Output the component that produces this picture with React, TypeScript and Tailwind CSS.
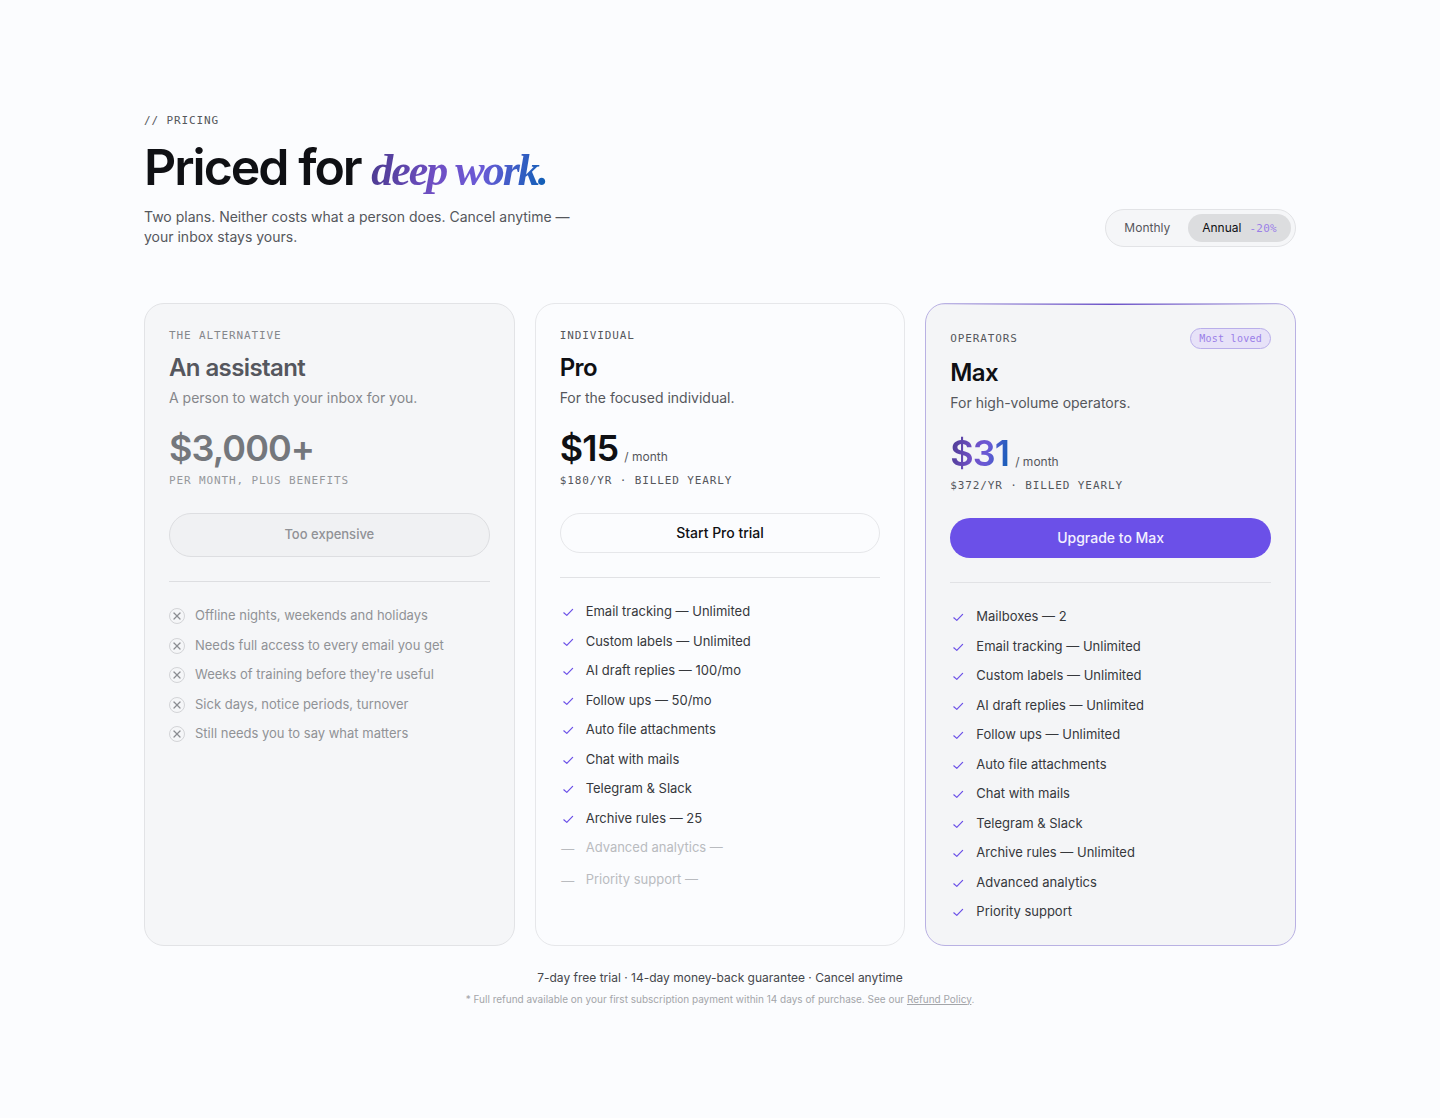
import { clsx } from "clsx"
import { Check, X } from "lucide-react"
import * as React from "react"

type Feature = {
    label: string
    included: boolean
}

type Plan = {
    id: string
    eyebrow: string
    name: string
    description: string
    price: string
    period?: string
    billing: string
    cta: string
    variant: "muted" | "plain" | "featured"
    badge?: string
    features: Feature[]
}

const on = (label: string): Feature => ({ label, included: true })
const off = (label: string): Feature => ({ label, included: false })

const plans: Plan[] = [
    {
        id: "assistant",
        eyebrow: "The alternative",
        name: "An assistant",
        description: "A person to watch your inbox for you.",
        price: "$3,000+",
        billing: "Per month, plus benefits",
        cta: "Too expensive",
        variant: "muted",
        features: [
            off("Offline nights, weekends and holidays"),
            off("Needs full access to every email you get"),
            off("Weeks of training before they're useful"),
            off("Sick days, notice periods, turnover"),
            off("Still needs you to say what matters"),
        ],
    },
    {
        id: "pro",
        eyebrow: "Individual",
        name: "Pro",
        description: "For the focused individual.",
        price: "$15",
        period: "/ month",
        billing: "$180/yr · billed yearly",
        cta: "Start Pro trial",
        variant: "plain",
        features: [
            on("Email tracking — Unlimited"),
            on("Custom labels — Unlimited"),
            on("AI draft replies — 100/mo"),
            on("Follow ups — 50/mo"),
            on("Auto file attachments"),
            on("Chat with mails"),
            on("Telegram & Slack"),
            on("Archive rules — 25"),
            off("Advanced analytics —"),
            off("Priority support —"),
        ],
    },
    {
        id: "max",
        eyebrow: "Operators",
        name: "Max",
        description: "For high-volume operators.",
        price: "$31",
        period: "/ month",
        billing: "$372/yr · billed yearly",
        cta: "Upgrade to Max",
        variant: "featured",
        badge: "Most loved",
        features: [
            on("Mailboxes — 2"),
            on("Email tracking — Unlimited"),
            on("Custom labels — Unlimited"),
            on("AI draft replies — Unlimited"),
            on("Follow ups — Unlimited"),
            on("Auto file attachments"),
            on("Chat with mails"),
            on("Telegram & Slack"),
            on("Archive rules — Unlimited"),
            on("Advanced analytics"),
            on("Priority support"),
        ],
    },
]

const monoLabel =
    "font-['DejaVu_Sans_Mono',monospace] text-[11px] leading-4 tracking-[0.08em] uppercase"

const brandText =
    "bg-linear-[100deg,#4b3a8f_0%,#6f4fc4_38%,#6a5ad6_62%,#0a5fb4_100%] bg-clip-text text-transparent"

function FeatureIcon({ plan, feature }: { plan: Plan; feature: Feature }) {
    if (plan.variant === "muted") {
        return (
            <span className="mt-[2px] flex size-4 shrink-0 items-center justify-center rounded-full border border-[#d3d4d7] text-[#8b8d92]">
                <X
                    className="size-3 shrink-0"
                    strokeWidth={2.5}
                />
            </span>
        )
    }

    if (!feature.included) {
        return (
            <span className="w-4 shrink-0 text-center leading-[22px] text-[#b9bbbf]">
                —
            </span>
        )
    }

    return (
        <span className="mt-[2px] flex size-4 shrink-0 items-center justify-center text-[#6b50e8]">
            <svg
                viewBox="0 0 16 16"
                fill="none"
                stroke="currentColor"
                strokeWidth={1.2}
                strokeLinecap="round"
                strokeLinejoin="round"
                className="size-4"
                aria-hidden="true">
                <path d="M3.8 8.8l3 2.6 5.8-6" />
            </svg>
        </span>
    )
}

function PlanCard({ plan }: { plan: Plan }) {
    const muted = plan.variant === "muted"
    const featured = plan.variant === "featured"

    return (
        <article
            className={clsx(
                "relative flex flex-col overflow-hidden rounded-[20px] border px-6 pt-6 pb-[23px]",
                muted && "border-[#e2e3e6] bg-[#f5f6f8]",
                featured && "border-[#b9b1e3] bg-[#f4f5f7]",
                plan.variant === "plain" && "border-[#e6e7ea] bg-[#fbfcfe]",
            )}>
            {featured && (
                <div className="absolute inset-x-0 top-0 h-px bg-linear-to-r from-transparent via-[#6b50c8] to-transparent" />
            )}

            <div className="flex items-center justify-between">
                <span
                    className={clsx(
                        monoLabel,
                        muted ? "text-[#85878b]" : "text-[#55575c]",
                    )}>
                    {plan.eyebrow}
                </span>
                {plan.badge && (
                    <span className="rounded-full border border-[#b9aeea] bg-[#e7e2f8] px-2 font-['DejaVu_Sans_Mono',monospace] text-[10px] leading-[19px] tracking-wide text-[#9b7fe8]">
                        {plan.badge}
                    </span>
                )}
            </div>

            <h2
                className={clsx(
                    "mt-2 text-[24px] leading-8 font-semibold tracking-tight",
                    muted ? "text-[#55575e]" : "text-[#0f1014]",
                )}>
                {plan.name}
            </h2>
            <p
                className={clsx(
                    "mt-1 text-sm",
                    muted ? "text-[#85878b]" : "text-[#55575c]",
                )}>
                {plan.description}
            </p>

            <div className="mt-5 flex items-baseline gap-1.5">
                <span
                    className={clsx(
                        "text-4xl leading-10 font-semibold tracking-tight",
                        muted && "text-[#74777c]",
                        plan.variant === "plain" && "text-[#0f1014]",
                        featured && brandText,
                    )}>
                    {plan.price}
                </span>
                {plan.period && (
                    <span className="text-xs text-[#55575c]">
                        {plan.period}
                    </span>
                )}
            </div>
            <p
                className={clsx(
                    monoLabel,
                    "mt-[5px]",
                    muted ? "text-[#96989c]" : "text-[#55575c]",
                )}>
                {plan.billing}
            </p>

            <button
                type="button"
                disabled={muted}
                className={clsx(
                    "mt-6 rounded-full font-medium",
                    muted &&
                        "h-11 border border-[#dddee1] bg-[#f0f1f3] text-[13px] text-[#909296]",
                    plan.variant === "plain" &&
                        "h-10 border border-[#e6e7ea] text-sm text-[#0f1014]",
                    featured && "h-10 bg-[#6b50e8] text-sm text-[#f4f1ff]",
                )}>
                {plan.cta}
            </button>

            <ul
                className={clsx(
                    "mt-6 flex flex-col gap-2.5 border-t pt-6 text-[13px] leading-normal",
                    muted ? "border-[#dddee1]" : "border-[#e1e2e5]",
                )}>
                {plan.features.map((feature) => (
                    <li
                        key={feature.label}
                        className={clsx(
                            "flex items-start gap-2.5",
                            muted && "text-[#909296]",
                            !muted && feature.included && "text-[#36383c]",
                            !muted && !feature.included && "text-[#b9bbbf]",
                        )}>
                        <FeatureIcon
                            plan={plan}
                            feature={feature}
                        />
                        <span>{feature.label}</span>
                    </li>
                ))}
            </ul>
        </article>
    )
}

export default function App() {
    const [annual, setAnnual] = React.useState(true)

    return (
        <main className="min-h-screen bg-[#fbfcfe] px-6 pt-[113px] pb-28 font-['Inter',sans-serif]">
            <div className="mx-auto max-w-6xl">
                <header className="flex items-end justify-between gap-6">
                    <div>
                        <p className={clsx(monoLabel, "text-[#55575c]")}>
                            // Pricing
                        </p>
                        <h1 className="mt-3 text-[50px] leading-[52px] font-semibold tracking-[-0.04em] text-[#0f1014]">
                            Priced for{" "}
                            <em
                                className={clsx(
                                    brandText,
                                    "font-['Liberation_Serif',serif] text-[44px] leading-none font-bold italic",
                                )}>
                                deep work.
                            </em>
                        </h1>
                        <p className="mt-3.5 max-w-md text-sm text-[#55575c]">
                            Two plans. Neither costs what a person does. Cancel
                            anytime — your inbox stays yours.
                        </p>
                    </div>

                    <div className="flex gap-1 rounded-full border border-[#e2e3e6] bg-[#f5f6f8] p-1 text-xs">
                        <button
                            type="button"
                            aria-pressed={!annual}
                            onClick={() => setAnnual(false)}
                            className={clsx(
                                "h-7 rounded-full px-3.5",
                                annual
                                    ? "text-[#55575c]"
                                    : "bg-[#dcdddf] text-[#0f1014]",
                            )}>
                            Monthly
                        </button>
                        <button
                            type="button"
                            aria-pressed={annual}
                            onClick={() => setAnnual(true)}
                            className={clsx(
                                "h-7 rounded-full px-3.5",
                                annual
                                    ? "bg-[#dcdddf] text-[#0f1014]"
                                    : "text-[#55575c]",
                            )}>
                            Annual
                            <span className="ml-2 font-['DejaVu_Sans_Mono',monospace] text-[11px] tracking-wide text-[#9b7fe8]">
                                -20%
                            </span>
                        </button>
                    </div>
                </header>

                <section className="mt-14 grid grid-cols-3 gap-5">
                    {plans.map((plan) => (
                        <PlanCard
                            key={plan.id}
                            plan={plan}
                        />
                    ))}
                </section>

                <footer className="mt-6 text-center">
                    <p className="text-xs text-[#45474c]">
                        7-day free trial · 14-day money-back guarantee · Cancel
                        anytime
                    </p>
                    <p className="mt-1.5 text-[10px] text-[#a3a5a9]">
                        * Full refund available on your first subscription
                        payment within 14 days of purchase. See our{" "}
                        <a
                            href="#refund-policy"
                            className="underline">
                            Refund Policy
                        </a>
                        .
                    </p>
                </footer>
            </div>
        </main>
    )
}
